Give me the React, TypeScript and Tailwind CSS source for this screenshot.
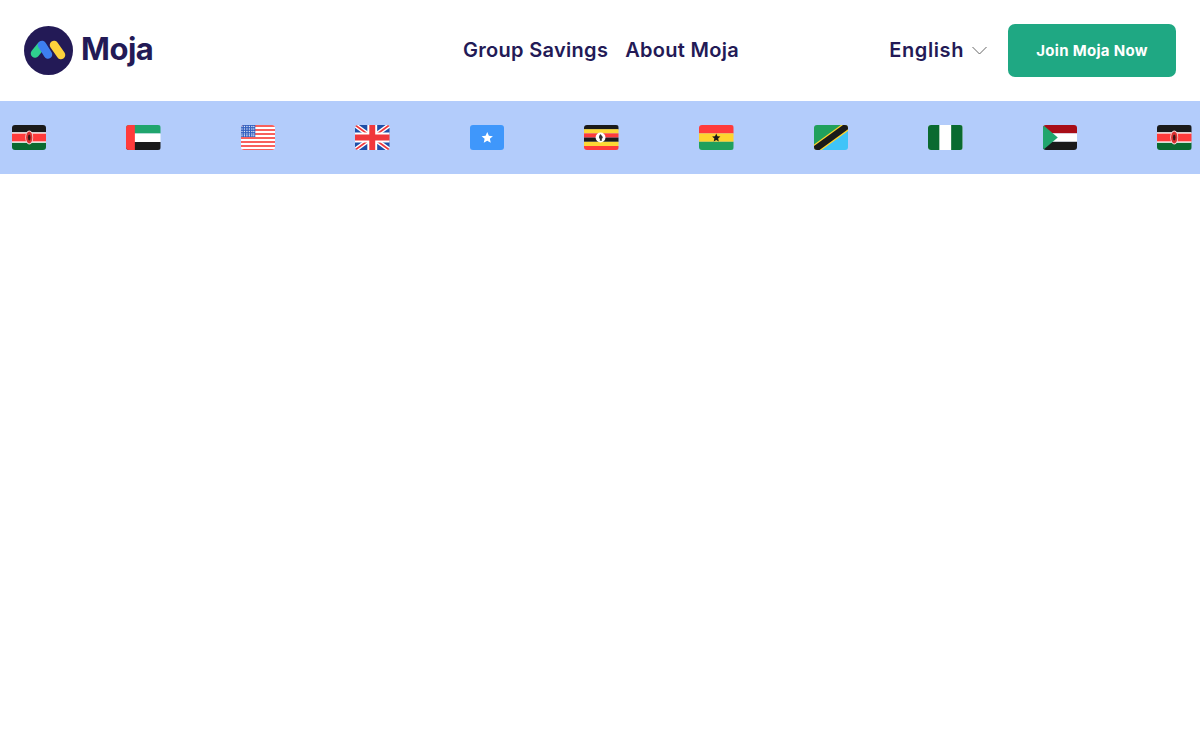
import type { ReactNode } from "react";

const font = { fontFamily: "Inter, 'Liberation Sans', sans-serif" };

function Kenya() {
  return (
    <>
      <rect width="35" height="8" fill="#1a1a1a" />
      <rect y="8" width="35" height="9" fill="#ff3b3b" />
      <rect y="17" width="35" height="8" fill="#0a6a30" />
      <rect y="7.2" width="35" height="1.4" fill="#fff" />
      <rect y="16.4" width="35" height="1.4" fill="#fff" />
      <ellipse cx="17.5" cy="12.5" rx="4" ry="7" fill="#f3d9d9" />
      <ellipse cx="17.5" cy="12.5" rx="3.2" ry="6" fill="#d93030" />
      <ellipse cx="17.5" cy="12.5" rx="1.3" ry="3" fill="#3a1515" />
    </>
  );
}

function Uae() {
  return (
    <>
      <rect width="35" height="8.5" fill="#20a56d" />
      <rect y="8.5" width="35" height="8.5" fill="#fff" />
      <rect y="17" width="35" height="8" fill="#1a1a1a" />
      <rect width="9" height="25" fill="#ff3b3b" />
    </>
  );
}

function Usa() {
  const stripes = [0, 4, 8, 12, 16, 20, 24];
  const dots = [1, 3.5, 6, 8.5, 11, 13];
  return (
    <>
      <rect width="35" height="25" fill="#fff" />
      {stripes.map((y) => (
        <rect key={y} y={y} width="35" height="2" fill="#f8605c" />
      ))}
      <rect width="14.5" height="12" fill="#3461c0" />
      {dots.map((x) =>
        [1.5, 4, 6.5, 9, 10.8].map((y) => (
          <circle key={`${x}-${y}`} cx={x} cy={y} r="0.7" fill="#dfe6f7" />
        )),
      )}
    </>
  );
}

function Uk() {
  return (
    <>
      <rect width="35" height="25" fill="#1f4fa8" />
      <path d="M0 0L35 25M35 0L0 25" stroke="#fff" strokeWidth="4.5" />
      <path d="M0 0L35 25M35 0L0 25" stroke="#f0373c" strokeWidth="1.8" />
      <rect x="12.5" width="10" height="25" fill="#fff" />
      <rect y="7.5" width="35" height="10" fill="#fff" />
      <rect x="14.5" width="6" height="25" fill="#f0373c" />
      <rect y="9.5" width="35" height="6" fill="#f0373c" />
    </>
  );
}

function Somalia() {
  return (
    <>
      <rect width="35" height="25" fill="#3f97fb" />
      <path
        d="M17.5 7l1.65 3.75 4.1.4-3.1 2.7.92 4-3.57-2.1-3.57 2.1.92-4-3.1-2.7 4.1-.4z"
        fill="#fff"
      />
    </>
  );
}

function Uganda() {
  return (
    <>
      <rect width="35" height="4.5" fill="#1a1a1a" />
      <rect y="4.2" width="35" height="4.2" fill="#fdd835" />
      <rect y="8.4" width="35" height="4.2" fill="#ff3b3b" />
      <rect y="12.6" width="35" height="4.2" fill="#1a1a1a" />
      <rect y="16.8" width="35" height="4.2" fill="#fdd835" />
      <rect y="21" width="35" height="4" fill="#ff3b3b" />
      <circle cx="16.8" cy="12.5" r="5" fill="#fff" />
      <path d="M17 9.2c-1.8.6-2.4 3.6-.8 4.8l-.2 1.8h2.2l-.2-2c1.2-.4 1.4-2 .4-2.6z" fill="#333" />
    </>
  );
}

function Ghana() {
  return (
    <>
      <rect width="35" height="8.4" fill="#ff3b3b" />
      <rect y="8.4" width="35" height="8.4" fill="#ffd42e" />
      <rect y="16.8" width="35" height="8.2" fill="#20a05c" />
      <path
        d="M17.5 8.5l1.2 2.8 3 .3-2.27 1.98.67 2.94-2.6-1.53-2.6 1.53.67-2.94-2.27-1.98 3-.3z"
        fill="#1a1a1a"
      />
    </>
  );
}

function Tanzania() {
  return (
    <>
      <path d="M0 25V0H35z" fill="#20a05c" />
      <path d="M0 25L35 0V25z" fill="#3fc4f8" />
      <path d="M0 25L35 0" stroke="#ffd42e" strokeWidth="9" />
      <path d="M0 25L35 0" stroke="#1a1a1a" strokeWidth="6.5" />
    </>
  );
}

function Nigeria() {
  return (
    <>
      <rect width="35" height="25" fill="#fff" />
      <rect width="11.5" height="25" fill="#0a6a30" />
      <rect x="23.5" width="11.5" height="25" fill="#0a6a30" />
    </>
  );
}

function Sudan() {
  return (
    <>
      <rect width="35" height="8.4" fill="#a80d18" />
      <rect y="8.4" width="35" height="8.4" fill="#fff" />
      <rect y="16.8" width="35" height="8.2" fill="#1a1a1a" />
      <path d="M0 0L15 12.5 0 25z" fill="#20a56d" />
    </>
  );
}

function Flag({ children }: { children: ReactNode }) {
  return (
    <svg viewBox="0 0 35 25" preserveAspectRatio="none" className="h-[25px] w-[34.5px] shrink-0 rounded-[3px]">
      {children}
    </svg>
  );
}

const flags = [Kenya, Uae, Usa, Uk, Somalia, Uganda, Ghana, Tanzania, Nigeria, Sudan, Kenya];

export default function App() {
  return (
    <div className="min-h-[750px] bg-white" style={font}>
      <header className="flex h-[101px] items-center px-6">
        <div className="flex w-[439px] items-center gap-2">
          <svg width="49" height="49" viewBox="0 0 49 49" className="mt-[-1px]">
            <circle cx="24.5" cy="24.5" r="24.5" fill="#231a56" />
            <path d="M11 27.5l6.5-8" stroke="#2fd08e" strokeWidth="8.5" strokeLinecap="round" />
            <path d="M18 19l6 9.5" stroke="#3d7ff0" strokeWidth="8.5" strokeLinecap="round" />
            <path d="M30 19l7 10" stroke="#fdd23c" strokeWidth="8.5" strokeLinecap="round" />
          </svg>
          <span className="mt-[-2px] text-[31px] font-bold tracking-[-0.5px] text-[#231a56]">Moja</span>
        </div>
        <nav className="mt-[-2px] flex items-center gap-[17px] text-[20px] font-semibold tracking-[0.3px] text-[#231a56]">
          <a>Group Savings</a>
          <a>About Moja</a>
        </nav>
        <div className="mt-[-2px] ml-auto flex items-center gap-[8px] text-[20px] font-semibold tracking-[0.6px] text-[#231a56]">
          English
          <svg width="15" height="9" viewBox="0 0 15 9" className="mt-[2px]" fill="none">
            <path d="M.5 1l7 7 7-7" stroke="#666" strokeWidth="1" />
          </svg>
        </div>
        <button className="ml-[21px] h-[53px] w-[168px] rounded-[7px] bg-[#1fa883] pt-px text-[15px] font-bold tracking-[0.3px] text-white">
          Join Moja Now
        </button>
      </header>
      <div className="flex h-[73px] items-center gap-[80.1px] overflow-hidden bg-[#b3ccfb] pl-[11.5px]">
        {flags.map((F, i) => (
          <Flag key={i}>
            <F />
          </Flag>
        ))}
      </div>
    </div>
  );
}
